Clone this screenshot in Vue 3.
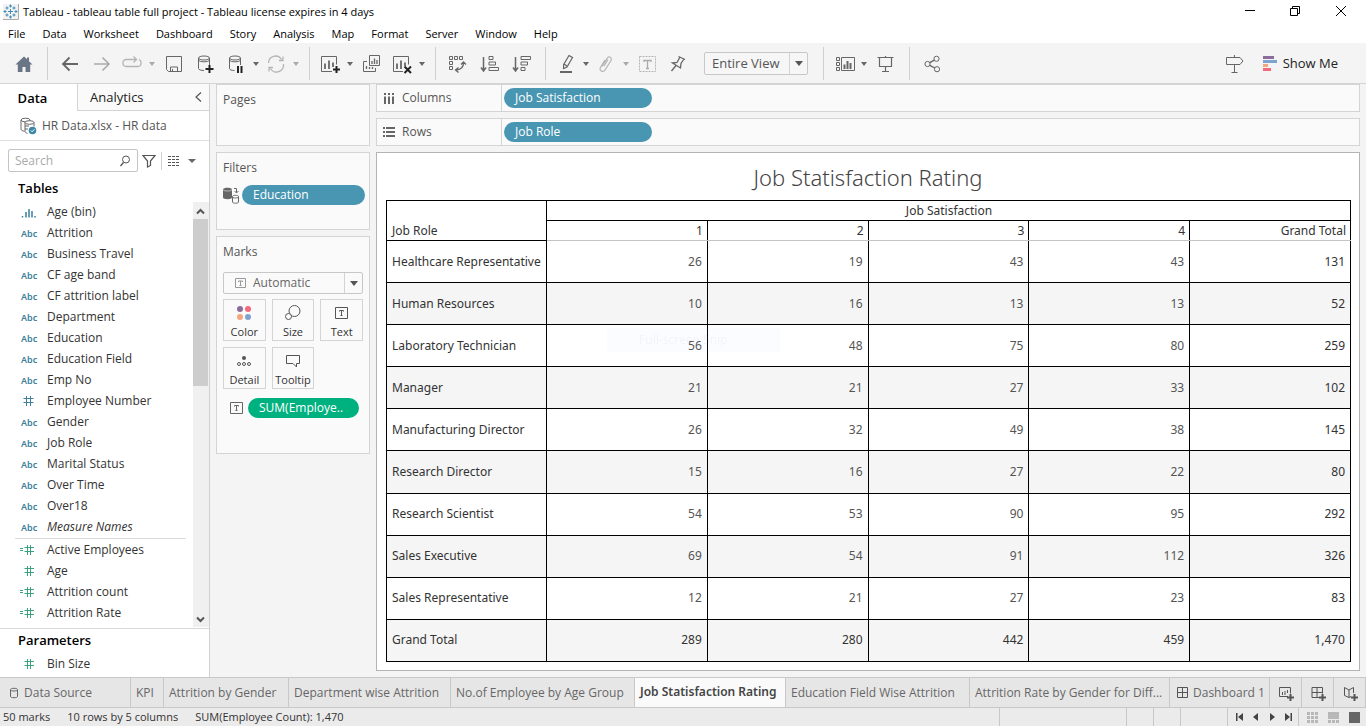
<script setup>
import { ref } from 'vue'

const menus = ['File', 'Data', 'Worksheet', 'Dashboard', 'Story', 'Analysis', 'Map', 'Format', 'Server', 'Window', 'Help']
const search = ref('')

const dimensions = [
  ['bin', 'Age (bin)'], ['abc', 'Attrition'], ['abc', 'Business Travel'], ['abc', 'CF age band'],
  ['abc', 'CF attrition label'], ['abc', 'Department'], ['abc', 'Education'], ['abc', 'Education Field'],
  ['abc', 'Emp No'], ['num', 'Employee Number'], ['abc', 'Gender'], ['abc', 'Job Role'],
  ['abc', 'Marital Status'], ['abc', 'Over Time'], ['abc', 'Over18'], ['abc', 'Measure Names'],
].map(([type, name]) => ({ type, name }))
const measures = [['calc', 'Active Employees'], ['num', 'Age'], ['calc', 'Attrition count'], ['calc', 'Attrition Rate']]
  .map(([type, name]) => ({ type, name }))

const levels = ['1', '2', '3', '4', 'Grand Total']
const rows = [
  ['Healthcare Representative', '26', '19', '43', '43', '131'],
  ['Human Resources', '10', '16', '13', '13', '52'],
  ['Laboratory Technician', '56', '48', '75', '80', '259'],
  ['Manager', '21', '21', '27', '33', '102'],
  ['Manufacturing Director', '26', '32', '49', '38', '145'],
  ['Research Director', '15', '16', '27', '22', '80'],
  ['Research Scientist', '54', '53', '90', '95', '292'],
  ['Sales Executive', '69', '54', '91', '112', '326'],
  ['Sales Representative', '12', '21', '27', '23', '83'],
  ['Grand Total', '289', '280', '442', '459', '1,470'],
]

const sheets = ['KPI', 'Attrition by Gender', 'Department wise Attrition', 'No.of Employee by Age Group',
  'Job Statisfaction Rating', 'Education Field Wise Attrition', 'Attrition Rate by Gender for Diff...']
const activeSheet = ref('Job Statisfaction Rating')
</script>

<template>
  <div class="app">
    <header class="titlebar">
      <svg class="logo" width="16" height="16" viewBox="0 0 16 16">
        <rect x="0" y="0" width="15" height="15" fill="#f2f2f2" />
        <path d="M0 15.500H15.500V0" fill="none" stroke="#aaa" />
        <path d="M7.500 5v5M5 7.500h5M7.500 0.500v3M6 2h3M7.500 11.500v3M6 13h3M2 6v3M0.500 7.500h3M13 6v3M11.500 7.500h3M4 2.500v3M2.500 4h3M11 2.500v3M9.500 4h3M4 9.500v3M2.500 11h3M11 9.500v3M9.500 11h3" fill="none" stroke="#3f8cb5" />
      </svg>
      <span class="window-title">Tableau - tableau table full project - Tableau license expires in 4 days</span>
      <button class="win" aria-label="Minimize"><svg width="12" height="12"><path d="M1 4.500h10" stroke="#000" /></svg></button>
      <button class="win" aria-label="Restore"><svg width="12" height="12" fill="none" stroke="#000"><path d="M.5 2.500h7v7h-7zM2.500 2V.5h7v7H8" /></svg></button>
      <button class="win" aria-label="Close"><svg width="12" height="12" fill="none" stroke="#000"><path d="M0 0l10 10M10 0L0 10" /></svg></button>
    </header>

    <nav class="menubar"><button v-for="m in menus" :key="m">{{ m }}</button></nav>

    <div class="toolbar" role="toolbar">
      <div class="home"><button class="tool" aria-label="Home">
        <svg viewBox="0 0 20 20"><path d="M10 2.500L1.500 10.500h2.300V18h4.700v-5h3v5h4.700v-7.500h2.300L15 7.200V3.500h-2v1.800z" fill="#6a7685" /></svg>
      </button></div>
      <div class="group">
        <button class="tool" aria-label="Undo"><svg viewBox="0 0 20 20"><path d="M18 10H3M9.500 3.500L3 10l6.500 6.500" stroke="#666" stroke-width="1.800" /></svg></button>
        <button class="tool" aria-label="Redo"><svg viewBox="0 0 20 20"><path d="M2 10h15M10.500 3.500L17 10l-6.500 6.500" stroke="#aaa" stroke-width="1.600" /></svg></button>
        <button class="tool drop off" aria-label="Replay"><svg viewBox="0 0 20 20"><path d="M7 5.500H4a3 3 0 0 0-3 3v1a3 3 0 0 0 3 3h12a3 3 0 0 0 3-3v-1a3 3 0 0 0-2-3M6 5.500h8M11.500 2.500l3 3-3 3" stroke="#b4b4b4" stroke-width="1.300" /></svg><i></i></button>
        <button class="tool" aria-label="Save"><svg viewBox="0 0 20 20"><path d="M2.500 2.500h15v15h-13l-2-2zM6.500 17v-4h7v4M8.500 15v2" /></svg></button>
        <button class="tool" aria-label="New Data Source"><svg viewBox="0 0 20 20"><ellipse cx="8" cy="4" rx="5.500" ry="2" /><path d="M2.500 4v10.500c0 1.200 2.500 2 5.500 2M13.500 4v7M2.500 6.500c2 1.800 9 1.800 11 0" /><path d="M13.500 11v8M9.500 15h8" stroke="#222" stroke-width="2" /></svg></button>
        <button class="tool drop" aria-label="Pause Auto Updates"><svg viewBox="0 0 20 20"><ellipse cx="9" cy="4" rx="5.500" ry="2" /><path d="M3.500 4v10.500c0 1.200 2 2 5 2M14.500 4v7M3.500 6.500c2 1.800 9 1.800 11 0" /><path d="M12 12v7M15.500 12v7" stroke="#222" stroke-width="2" /></svg><i></i></button>
        <button class="tool drop off" aria-label="Run Update"><svg viewBox="0 0 20 20"><path d="M2.500 9a7 7 0 0 1 13-3.500M17.500 10a7 7 0 0 1-13 4.500M17 2.500v4h-4M3 17.500v-4h4" stroke="#b4b4b4" stroke-width="1.300" /></svg><i></i></button>
      </div>
      <div class="group">
        <button class="tool drop" aria-label="New Worksheet"><svg viewBox="0 0 20 20"><path d="M12 17.500H1.500v-15h15v8" /><path d="M5 9.500V15M9 6.500V15M13 8.500V13" stroke="#555" stroke-width="1.600" /><path d="M16.500 12v7M13 15.500h7" stroke="#222" stroke-width="2" /></svg><i></i></button>
        <button class="tool" aria-label="Duplicate Sheet"><svg viewBox="0 0 20 20"><path d="M7.500 1.500h10v10h-10zM5 7.500H1.500v10h12V14" /><path d="M10 7v3M12.500 4.500V10M15 6v4M4.500 12v3M7.500 13v2M10.500 13v2" stroke-width="1.300" /></svg></button>
        <button class="tool drop" aria-label="Clear Sheet"><svg viewBox="0 0 20 20"><path d="M11 17.500H1.500v-15h15v8" /><path d="M5 9.500V15M9 6.500V15M13 8.500V12" stroke="#555" stroke-width="1.600" /><path d="M12.500 12.500l6.500 6.500M19 12.500L12.500 19" stroke="#222" stroke-width="2" /></svg><i></i></button>
      </div>
      <div class="group">
        <button class="tool" aria-label="Swap Rows and Columns"><svg viewBox="0 0 20 20"><path d="M1.500 2.500h3v3h-3zM6.500 2.500h3v3h-3zM11.500 2.500h3v3h-3zM1.500 7.500h3v3h-3zM1.500 12.500h3v3h-3z" /><path d="M15.500 8v1c0 4-3 6.500-7 7M13 10.500L15.500 8l2.500 2.500M10.500 13.500L7.500 16l3 2.500" stroke-width="1.300" /></svg></button>
        <button class="tool" aria-label="Sort Ascending"><svg viewBox="0 0 20 20"><path d="M3.500 3v13M1 13.500L3.500 17 6 13.500" stroke-width="1.500" /><path d="M9 2.500h4v3H9zM9 8h6.500v3H9zM9 13.500h9.500v3H9z" /></svg></button>
        <button class="tool" aria-label="Sort Descending"><svg viewBox="0 0 20 20"><path d="M3.500 3v13M1 13.500L3.500 17 6 13.500" stroke-width="1.500" /><path d="M9 2.500h9.500v3H9zM9 8h6.500v3H9zM9 13.500h4v3H9z" /></svg></button>
      </div>
      <div class="group">
        <button class="tool drop" aria-label="Highlight"><svg viewBox="0 0 20 20"><path d="M13 1.500l3.500 2L11 13l-3.500 1.500.200-4zM8 10l3 2" stroke-width="1.200" /><path d="M4 18h12" stroke-width="2" /></svg><i></i></button>
        <button class="tool drop off" aria-label="Group Members"><svg viewBox="0 0 20 20"><path d="M6 12.500l5-8c1.800-3 5.600-.900 4 2L9 16c-1.800 2.800-6.500.600-4.500-2.800L9 6M8 12l4-6.500" stroke="#b4b4b4" stroke-width="1.200" /></svg><i></i></button>
        <button class="tool" aria-label="Show Mark Labels"><svg viewBox="0 0 20 20"><path d="M1.500 2.500h16v15h-16z" stroke="#b4b4b4" stroke-dasharray="2 1" /><path d="M6 8V6.500h7V8M9.500 6.500v8M8 14.500h3" stroke="#aaa" stroke-width="1.300" /></svg></button>
        <button class="tool" aria-label="Fix Axes"><svg viewBox="0 0 20 20"><path d="M8.500 2.500l6.500 3M10 3l-3 5.500-4.500.500 8 5 .500-4.500L14 5M6 11.500L1.500 17" stroke-width="1.300" /></svg></button>
        <label class="select fit"><select aria-label="Fit"><option>Entire View</option></select><span><i></i></span></label>
      </div>
      <div class="group">
        <button class="tool drop" aria-label="Show/Hide Cards"><svg viewBox="0 0 20 20"><path d="M2.500 3.500h3v3h-3zM2.500 8.500h3v3h-3zM2.500 13.500h3v3h-3zM7.500 3.500h13v13h-13z" /><path d="M10.500 10.500V15M13.500 7V15M16.500 9V15" stroke-width="2" /></svg><i></i></button>
        <button class="tool" aria-label="Presentation Mode"><svg viewBox="0 0 20 20"><path d="M1.500 3.500h16M3.500 3.500v9h12v-9M9.500 2v1.500M9.500 12.500v5M6 17.500h7" stroke-width="1.200" /></svg></button>
      </div>
      <div class="group last">
        <button class="tool" aria-label="Share"><svg viewBox="0 0 20 20"><circle cx="5.500" cy="10" r="2.600" /><circle cx="14.500" cy="4.800" r="2.600" /><circle cx="15" cy="15.200" r="2.600" /><path d="M7.800 8.700l4.500-2.600M7.800 11.300l5 2.700" stroke-width="1.400" /></svg></button>
      </div>
      <button class="tool guide" aria-label="Show Guide"><svg viewBox="0 0 20 20"><path d="M1.500 3.500h13.500l3 3.500-3 3.500H1.500zM9.500 1v2.500M9.500 10.500v8M6.500 18.500h6" /></svg></button>
      <button class="showme">
        <svg width="15" height="15"><path d="M0 0h11v3H0z" fill="#8a6d9a" /><path d="M0 4h14v3H0z" fill="#7fa3d1" /><path d="M0 8h5v3H0z" fill="#f3a77c" /><path d="M0 12h8v3H0z" fill="#f5697c" /></svg>
        Show Me
      </button>
    </div>

    <main class="main">
      <aside class="sidebar">
        <div class="pane-tabs">
          <button class="on">Data</button>
          <button class="analytics">Analytics</button>
          <button class="collapse" aria-label="Collapse"><svg width="8" height="12" fill="none" stroke="#555"><path d="M7 1.500L2 6l5 4.500" stroke-width="1.200" /></svg></button>
        </div>
        <div class="source">
          <svg width="18" height="18" viewBox="0 0 18 18" fill="none" stroke="#666">
            <ellipse cx="5.500" cy="3" rx="4.500" ry="1.800" /><path d="M1 3v9c0 1.200 1.500 2 3.500 2.200" />
            <ellipse cx="9.500" cy="5.500" rx="4.500" ry="1.800" fill="#fff" /><path d="M5 5.500v9c0 .800 1 1.500 2.500 1.800M14 5.500v4M5 9h4M5 12h3" />
            <circle cx="12.500" cy="13.500" r="3.800" fill="#3d87a6" stroke="none" /><path d="M10.800 13.500l1.300 1.300 2.300-2.500" stroke="#fff" />
          </svg>
          <span>HR Data.xlsx - HR data</span>
        </div>
        <div class="finder">
          <label class="search"><input v-model="search" placeholder="Search" aria-label="Search"><svg width="11" height="12" fill="none" stroke="#555"><circle cx="6" cy="4.500" r="3.500" /><path d="M3.500 7.500L0.500 11" stroke-width="1.300" /></svg></label>
          <button aria-label="Filter fields"><svg width="14" height="14" fill="none" stroke="#555"><path d="M1 1.500h12L8.500 7v4.500l-3 1.500V7z" stroke-width="1.200" /></svg></button>
          <button class="view" aria-label="View options">
            <svg width="12" height="10" fill="none" stroke="#555"><path d="M0 .5h12M0 3.500h12M0 6.500h12M0 9.500h12" stroke-dasharray="3 1" /></svg>
            <i></i>
          </button>
        </div>
        <h2>Tables</h2>
        <div class="fields">
          <div class="field-list">
            <div v-for="f in dimensions" :key="f.name" class="field" :class="{ italic: f.name === 'Measure Names' }">
              <b v-if="f.type === 'abc'" class="abc">Abc</b>
              <svg v-else-if="f.type === 'bin'" width="16" height="12" fill="none" stroke="#3d7f9c"><path d="M1.500 9v1.500M5 5v5.500M8 2v8.500M11 4v6.500M14 9v1.500" stroke-width="1.500" /></svg>
              <svg v-else width="16" height="12" fill="none" stroke="#3d7f9c"><path d="M5.500 0v10M9.500 0v10M2.500 2.500h10M2.500 6.500h10" /></svg>
              <span>{{ f.name }}</span>
            </div>
            <hr>
            <div v-for="f in measures" :key="f.name" class="field">
              <svg width="16" height="12" fill="none" stroke="#3aa37d"><path d="M6.500 0v10M9.500 0v10M3.500 2.500h9.500M3.500 6.500h9.500" /><path v-if="f.type === 'calc'" d="M-1 3.500h3M-1 5.500h3" /></svg>
              <span>{{ f.name }}</span>
            </div>
          </div>
          <div class="scrollbar">
            <svg width="9" height="7" fill="none" stroke="#555"><path d="M1 5.500L4.500 2 8 5.500" stroke-width="2" /></svg>
            <div class="thumb"></div>
            <svg width="9" height="7" fill="none" stroke="#555"><path d="M1 1.500L4.500 5 8 1.500" stroke-width="2" /></svg>
          </div>
        </div>
        <div class="params">
          <h2>Parameters</h2>
          <div class="field">
            <svg width="16" height="12" fill="none" stroke="#3aa37d"><path d="M6.500 0v10M9.500 0v10M3.500 2.500h9.500M3.500 6.500h9.500" /></svg>
            <span>Bin Size</span>
          </div>
        </div>
      </aside>

      <section class="cards">
        <div class="card pages"><h3>Pages</h3></div>
        <div class="card filters">
          <h3>Filters</h3>
          <div class="pill-row">
            <svg width="17" height="17" viewBox="0 0 17 17"><path d="M0 2.500C0 .300 9 .300 9 2.500v8c0 2.200-9 2.200-9 0z" fill="#666" /><path d="M0 2.800c1 1.600 8 1.600 9 0" fill="none" stroke="#ddd" stroke-width=".700" /><path d="M9.500 9.500c0-1.600 6-1.600 6 0V15c0 1.600-6 1.600-6 0zM9.500 10c0 1.300 6 1.300 6 0M11 1.500h2.500v4M11.500 4l2 2 2-2" fill="none" stroke="#666" /></svg>
            <button class="pill">Education</button>
          </div>
        </div>
        <div class="card marks">
          <h3>Marks</h3>
          <label class="select mark-type">
            <svg width="12" height="11" fill="none" stroke="#999"><path d="M.5.5h10v9H.5zM3.500 4V3h4v1M5.500 3v4.500M4.500 7.500h2" /></svg>
            <select aria-label="Mark type"><option>Automatic</option></select><span><i></i></span>
          </label>
          <div class="mark-grid">
            <button><svg width="18" height="18"><circle cx="5" cy="5" r="3" fill="#8a6d9a" /><circle cx="13" cy="5" r="3" fill="#f5697c" /><circle cx="5" cy="13" r="3" fill="#f3a77c" /><circle cx="13" cy="13" r="3" fill="#7fa3d1" /></svg>Color</button>
            <button><svg width="18" height="18" fill="none" stroke="#555"><circle cx="10.500" cy="7" r="5.500" /><circle cx="4.500" cy="12.500" r="3" fill="#fafafa" /></svg>Size</button>
            <button><svg width="18" height="18" fill="none" stroke="#555"><path d="M2.500 3.500h12v11h-12z" /><path d="M6.500 7.500v-1h4v1M8.500 6.500v5M7.500 11.500h2" /></svg>Text</button>
            <button><svg width="18" height="18" fill="none" stroke="#555"><circle cx="9" cy="6" r="2" fill="#555" stroke="none" /><circle cx="4" cy="12" r="1.500" /><circle cx="9" cy="12" r="1.500" /><circle cx="14" cy="12" r="1.500" /></svg>Detail</button>
            <button><svg width="18" height="18" fill="none" stroke="#555"><path d="M2.500 3.500h13v8h-3v3.500l-3.500-3.500h-6.500z" /></svg>Tooltip</button>
          </div>
          <div class="pill-row encoded">
            <svg width="14" height="13" fill="none" stroke="#666"><path d="M.5.5h12v11H.5z" /><path d="M4.500 4.500v-1h4v1M6.500 3.500v5M5.500 8.500h2" /></svg>
            <button class="pill green">SUM(Employe..</button>
          </div>
        </div>
      </section>

      <section class="view-area">
        <div class="shelf">
          <div class="shelf-name"><svg width="13" height="13" fill="none" stroke="#666" stroke-width="2"><path d="M2 4.500V12M6 4.500V12M10 4.500V12M2 1v2M6 1v2M10 1v2" /></svg>Columns</div>
          <button class="pill">Job Satisfaction</button>
        </div>
        <div class="shelf">
          <div class="shelf-name"><svg width="13" height="13" fill="none" stroke="#666" stroke-width="2"><path d="M0 2h2M0 6h2M0 10h2M3 2h9M3 6h9M3 10h9" /></svg>Rows</div>
          <button class="pill">Job Role</button>
        </div>
        <div class="viz">
          <h1>Job Statisfaction Rating</h1>
          <div class="table-box">
            <table>
              <colgroup><col class="role"><col v-for="l in levels" :key="l"></colgroup>
              <thead>
                <tr><th rowspan="2" class="corner" scope="col">Job Role</th><th colspan="5" class="span">Job Satisfaction</th></tr>
                <tr><th v-for="l in levels" :key="l" class="level" scope="col">{{ l }}</th></tr>
              </thead>
              <tbody>
                <tr v-for="r in rows" :key="r[0]">
                  <th scope="row">{{ r[0] }}</th>
                  <td v-for="(v, i) in r.slice(1)" :key="i">{{ v }}</td>
                </tr>
              </tbody>
            </table>
          </div>
          <div class="snip">Full-screen Snip</div>
        </div>
      </section>
    </main>

    <nav class="sheets">
      <button class="first"><svg width="10" height="12" fill="none" stroke="#666"><path d="M1.500 2.500c0-1.600 7-1.600 7 0v7c0 1.600-7 1.600-7 0zM1.500 3c0 1.300 7 1.300 7 0" /></svg>Data Source</button>
      <button v-for="s in sheets" :key="s" :class="{ active: s === activeSheet }" @click="activeSheet = s">{{ s }}</button>
      <button class="dash"><svg width="12" height="12" fill="none" stroke="#555"><path d="M.5.5h10v10H.5zM5.500.5v10M.5 5.500h10" /></svg>Dashboard 1</button>
      <button class="add" aria-label="New Worksheet"><svg width="16" height="16" fill="none" stroke="#555"><path d="M9 10.500H.5v-9h11v6M3.500 6v3M6 5v4M8.500 4v3" /><path d="M11.500 8v7M8 11.500h7" stroke-width="2" /></svg></button>
      <button class="add" aria-label="New Dashboard"><svg width="16" height="16" fill="none" stroke="#555"><path d="M8 11.500H1v-10h10.500v6M6 1.500v10M1 6.500h10.500" /><path d="M11.500 8v7M8 11.500h7" stroke-width="2" /></svg></button>
      <button class="add" aria-label="New Story"><svg width="16" height="16" fill="none" stroke="#555"><path d="M6 4v7.500L1.500 9.500V1.500L6 4l4.500-2.500v5.500M6 11.500l2-1" /><path d="M11.500 8v7M8 11.500h7" stroke-width="2" /></svg></button>
    </nav>

    <footer class="status">
      <div class="facts"><span>50 marks</span><span>10 rows by 5 columns</span><span>SUM(Employee Count): 1,470</span></div>
      <div></div><div></div><div></div><div></div>
      <div class="pager">
        <button aria-label="First"><svg width="8" height="8"><path d="M0 0h1.500v8H0zM7 0v8L2 4z" /></svg></button>
        <button aria-label="Previous"><svg width="8" height="8"><path d="M6 0v8L1 4z" /></svg></button>
        <button aria-label="Next"><svg width="8" height="8"><path d="M2 0v8l5-4z" /></svg></button>
        <button aria-label="Last"><svg width="8" height="8"><path d="M1 0v8l5-4zM6.500 0H8v8H6.500z" /></svg></button>
      </div>
      <div class="modes">
        <button aria-label="Show sheet sorter"><svg width="11" height="11" fill="#b8b8b8"><path d="M0 0h3v3H0zM4 0h3v3H4zM8 0h3v3H8zM0 4h3v3H0zM4 4h3v3H4zM8 4h3v3H8zM0 8h3v3H0zM4 8h3v3H4zM8 8h3v3H8z" /></svg></button>
        <button aria-label="Show filmstrip"><svg width="11" height="11" fill="#b8b8b8"><path d="M0 0h11v7H0zM0 8h3v3H0zM4 8h3v3H4zM8 8h3v3H8z" /></svg></button>
        <button aria-label="Show tabs"><svg width="11" height="11"><path d="M0 0h11v11H0z" fill="#666" /></svg></button>
      </div>
    </footer>
  </div>
</template>

<style>
body { margin: 0; }
</style>

<style scoped>
.app { display: flex; flex-direction: column; height: 100vh; background: #f4f4f4; color: #333; font: 12px/16px "Open Sans", "Noto Sans", sans-serif; overflow: hidden; }
.app *, .app *::before { box-sizing: border-box; }
button, select, input { font: inherit; color: inherit; background: none; border: 0; margin: 0; padding: 0; }
h1, h2, h3 { margin: 0; font-weight: 400; }
svg { display: block; flex: none; overflow: visible; }
i { display: block; flex: none; border: 3px solid transparent; border-top: 4px solid #666; border-bottom: 0; }

.titlebar { display: flex; align-items: center; height: 24px; padding: 0 1px 0 3px; background: #fff; color: #000; font-size: 11px; }
.window-title { flex: 1; padding-left: 4px; }
.win { display: grid; place-items: center; width: 46px; height: 20px; }
.menubar { display: flex; gap: 1px; height: 19px; background: #fff; color: #000; font-size: 11px; }
.menubar button { padding: 0 8px; line-height: 19px; }

.toolbar { display: flex; flex: none; height: 41px; border-bottom: 1px solid #d4d4d4; }
.home { width: 48px; padding-left: 8px; }
.home, .group { display: flex; align-items: center; position: relative; }
.group { padding: 0 8px 0 6px; }
.home::after, .group:not(.last)::after { content: ""; position: absolute; right: 0; top: 4px; bottom: 3px; width: 1px; background: #d0d0d0; }
.tool { display: flex; align-items: center; width: 32px; height: 32px; padding: 2px 0 0 6px; }
.tool svg { width: 20px; height: 20px; fill: none; stroke: #666; }
.tool.drop { width: 40px; padding-left: 4px; gap: 7px; }
.home svg { stroke: none; }
.off i { border-top-color: #aaa; }
.select { display: flex; align-items: stretch; border: 1px solid #c8c8c8; border-radius: 2px; background: #fafafa; }
.select select { flex: 1; min-width: 0; appearance: none; outline: 0; }
.select span { display: grid; place-items: center; width: 18px; border-left: 1px solid #d4d4d4; }
.select i { border-width: 5px 4px 0; border-top-color: #555; }
.fit { width: 104px; height: 23px; margin: 0 8px; background: #f6f6f6; }
.fit select { padding-left: 7px; font-size: 13px; color: #555; }
.guide { margin-left: auto; align-self: center; }
.showme { display: flex; align-items: center; gap: 5px; padding: 0 28px 0 12px; font-size: 13px; color: #222; }

.main { display: flex; flex: 1; min-height: 0; }
.sidebar { display: flex; flex-direction: column; width: 210px; background: #fff; border-right: 1px solid #d0d0d0; }
.pane-tabs { display: flex; height: 27px; font-size: 13px; }
.pane-tabs .on { width: 77px; padding-right: 12px; font-weight: 600; color: #000; }
.analytics { flex: 1; padding-left: 12px; text-align: left; border-left: 1px solid #d4d4d4; }
.collapse { padding-right: 7px; }
.analytics, .collapse { border-bottom: 1px solid #d4d4d4; background: #fafafa; color: #222; }
.source { display: flex; align-items: center; gap: 4px; height: 30px; padding-left: 20px; border-bottom: 1px solid #e0e0e0; color: #555; }
.finder { display: flex; align-items: center; padding: 8px 12px 0 8px; }
.search { display: flex; align-items: center; width: 130px; height: 23px; padding: 0 6px; border: 1px solid #c4c4c4; border-radius: 2px; margin-right: 4px; }
.search input { flex: 1; min-width: 0; outline: 0; }
.search input::placeholder { color: #aaa; opacity: 1; }
.view { display: flex; align-items: center; gap: 8px; height: 18px; margin-left: 5px; padding-left: 6px; border-left: 1px solid #d0d0d0; }
.view i { border-width: 4px 4px 0; }
h2 { padding-left: 18px; font-size: 13px; line-height: 18px; font-weight: 600; color: #000; }
.sidebar > h2 { margin: 7px 0 5px; }
.fields { display: flex; flex: 1; min-height: 0; overflow: hidden; }
.field-list { flex: 1; }
.field { display: flex; align-items: center; height: 21px; padding: 0 0 2px 21px; white-space: nowrap; }
.field .abc, .field svg { width: 16px; margin-right: 10px; }
.field svg { margin-top: 2px; }
.abc { margin-top: 2px; font: 600 9px/12px "Noto Sans", sans-serif; color: #3d7f9c; }
.italic span { font-style: italic; }
hr { height: 1px; margin: 0 7px 1px 15px; border: 0; background: #dcdcdc; }
.scrollbar { display: flex; flex-direction: column; align-items: center; width: 16px; margin-bottom: 1px; padding: 6px 1px 4px 0; background: #f0f0f0; }
.thumb { width: 15px; height: 167px; margin: 4px 0 auto; background: #cdcdcd; }
.params { height: 49px; padding-top: 2px; border-top: 1px solid #d8d8d8; }
.params .field { margin-top: 5px; }

.cards { display: flex; flex-direction: column; gap: 6px; width: 154px; margin-left: 6px; }
.card { border: 1px solid #d4d4d4; background: #fafafa; padding: 7px 6px; }
.pages { height: 62px; }
.filters { height: 78px; }
.marks { height: 218px; }
h3 { font-size: 12px; line-height: 16px; color: #555; }
.pill { height: 20px; padding: 0 11px; border-radius: 10px; background: #4996b2; color: #fff; text-align: left; font-weight: 500; }
.pill-row { display: flex; align-items: center; gap: 2px; margin-top: 9px; }
.pill-row .pill { flex: 1; margin-right: -2px; }
.mark-type { height: 22px; margin-top: 12px; }
.mark-type svg { margin: 5px 6px 0 11px; }
.mark-type select { color: #666; }
.mark-grid { display: grid; grid-template-columns: repeat(3, 1fr); gap: 6px; margin-top: 5px; }
.mark-grid button { display: flex; flex-direction: column; align-items: center; gap: 2px; height: 42px; padding-top: 4px; border: 1px solid #d4d4d4; white-space: nowrap; font-size: 11px; color: #333; }
.encoded { gap: 4px; padding: 0 6px 0 7px; }
.pill.green { background: #00b180; }

.view-area { display: flex; flex-direction: column; flex: 1; min-width: 0; gap: 6px; margin: 0 6px 6px; }
.shelf { display: flex; align-items: center; height: 28px; border: 1px solid #d4d4d4; background: #fafafa; }
.shelf-name { display: flex; align-items: center; gap: 6px; align-self: stretch; width: 125px; padding-left: 6px; border-right: 1px solid #d4d4d4; color: #555; }
.shelf .pill { width: 148px; margin-left: 2px; }
.viz { position: relative; display: flex; flex-direction: column; flex: 1; min-height: 0; border: 1px solid #b4b4b4; background: #fff; font-family: "Noto Sans", sans-serif; }
h1 { height: 47px; font-size: 22px; line-height: 48px; font-weight: 300; text-align: center; color: #444; }
.table-box { flex: 1; min-height: 0; padding: 0 8px 8px 9px; }
table { width: 100%; height: 100%; table-layout: fixed; border-collapse: collapse; color: #555; }
.role { width: 160px; }
th, td { padding: 0 4px 0 5px; border: 1px solid #000; font-weight: 400; text-align: right; white-space: nowrap; line-height: 16px; }
th { color: #333; }
.span { height: 20px; text-align: center; }
.level { height: 20px; border-bottom-color: #c4c4c4; }
.corner { vertical-align: bottom; text-align: left; padding-bottom: 1px; }
tbody th { text-align: left; padding-right: 0; }
tbody td { padding-right: 5px; }
tbody tr:nth-child(even) { background: #f5f5f5; }
tbody tr:first-child td { border-top-color: #c4c4c4; }
tbody td:last-child, tbody tr:last-child td { color: #333; }
.snip { position: absolute; left: 230px; top: 175px; width: 173px; height: 24px; padding-left: 32px; line-height: 24px; color: rgb(110 120 150 / 8%); background: rgb(120 160 255 / 3%); pointer-events: none; }

.sheets { display: grid; grid-template-columns: 131px 33px 125px 162px 184px 151px 184px 200px 100px 32px 32px 1fr; flex: none; height: 31px; border-top: 1px solid #c8c8c8; border-bottom: 1px solid #c8c8c8; background: #e6e6e6; color: #666; }
.sheets button { display: flex; align-items: center; padding: 0 0 0 5px; border-right: 1px solid #c8c8c8; white-space: nowrap; overflow: hidden; }
.sheets .first { padding-left: 9px; gap: 5px; }
.sheets .dash { padding-left: 7px; gap: 4px; }
.sheets .add { padding: 2px 0 0 9px; }
.sheets .active { padding-bottom: 2px; background: #fafafa; color: #444; font-family: "Noto Sans", sans-serif; font-weight: 600; }
.status { display: grid; grid-template-columns: 1fr 127px 27px 27px 47px 71px 67px; flex: none; height: 18px; background: #ebebeb; color: #333; font-size: 11px; }
.status > div { display: flex; align-items: center; border-right: 1px solid #c8c8c8; }
.status > div:last-child { border-right: 0; }
.facts { gap: 17px; padding-left: 3px; }
.status .pager { gap: 8px; padding-left: 8px; fill: #444; }
.status .modes { gap: 10px; padding-left: 8px; }
</style>
